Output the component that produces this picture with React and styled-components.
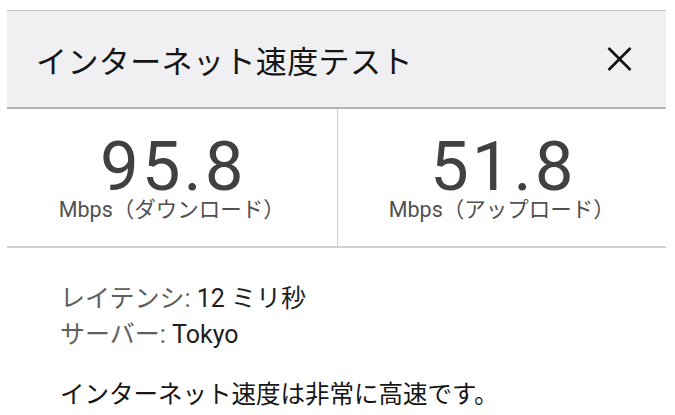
import React from "react";
import styled, { createGlobalStyle } from "styled-components";

const Global = createGlobalStyle`
  html, body { margin: 0; padding: 0; background: #ffffff; }
  body { font-family: Roboto, "Noto Sans CJK JP", sans-serif; }
`;

const Panel = styled.div`
  margin: 10px 0 0 7px;
  width: 659px;
`;

const Header = styled.div`
  height: 96px;
  box-sizing: content-box;
  display: flex;
  align-items: center;
  justify-content: space-between;
  padding: 0 34px 0 29px;
  background: #f0f0f2;
  border-top: 1px solid #c4c4c6;
  border-bottom: 2px solid #b4b4b6;
`;

const Title = styled.h1`
  margin: 0;
  font-family: "Noto Sans CJK JP", sans-serif;
  font-weight: 400;
  font-size: 31px;
  color: #151515;
  letter-spacing: 0.4px;
`;

const Close = styled.button`
  border: 0;
  background: none;
  padding: 0;
  width: 26px;
  height: 26px;
  display: flex;
  align-items: center;
  justify-content: center;
`;

const Stats = styled.div`
  display: grid;
  grid-template-columns: 1fr 1fr;
  border-bottom: 2px solid #d2d2d4;
`;

const Stat = styled.div`
  display: flex;
  flex-direction: column;
  align-items: center;
  padding: 28px 0 0;
  height: 109px;
  border-left: ${(p) => (p.$divider ? "1.5px solid #cfcfd1" : "none")};
`;

const Value = styled.div`
  font-family: Roboto, sans-serif;
  font-size: 69px;
  line-height: 60px;
  letter-spacing: 3px;
  padding-left: 3px;
  color: #414141;
`;

const Unit = styled.div`
  font-family: Roboto, "Noto Sans CJK JP", sans-serif;
  font-size: 21.5px;
  line-height: 22px;
  margin-top: 2px;
  color: #505050;
`;

const Info = styled.div`
  padding: 33px 0 0 53px;
  font-family: Roboto, "Noto Sans CJK JP", sans-serif;
`;

const Line = styled.div`
  font-size: 25px;
  line-height: 36px;
  color: #1e1e1e;
`;

const Label = styled.span`
  color: #606060;
`;

const Summary = styled.p`
  margin: 22px 0 0;
  font-family: "Noto Sans CJK JP", sans-serif;
  font-size: 24.5px;
  line-height: 36px;
  color: #161616;
`;

export default function App() {
  return (
    <>
      <Global />
      <Panel>
        <Header>
          <Title>インターネット速度テスト</Title>
          <Close aria-label="閉じる">
            <svg width="25" height="24" viewBox="0 0 25 24">
              <path d="M1.5 1 L23.5 23 M23.5 1 L1.5 23" stroke="#111" strokeWidth="2.6" fill="none" />
            </svg>
          </Close>
        </Header>
        <Stats>
          <Stat>
            <Value>95.8</Value>
            <Unit>Mbps（ダウンロード）</Unit>
          </Stat>
          <Stat $divider>
            <Value>51.8</Value>
            <Unit>Mbps（アップロード）</Unit>
          </Stat>
        </Stats>
        <Info>
          <Line>
            <Label>レイテンシ:</Label> 12 ミリ秒
          </Line>
          <Line>
            <Label>サーバー:</Label> Tokyo
          </Line>
          <Summary>インターネット速度は非常に高速です。</Summary>
        </Info>
      </Panel>
    </>
  );
}
